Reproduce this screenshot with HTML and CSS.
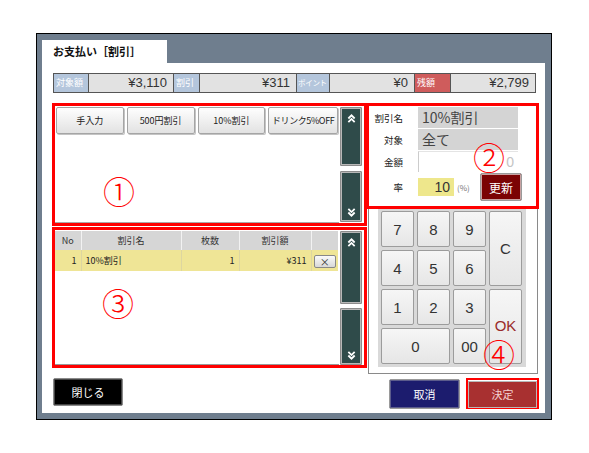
FILE: index.html
```html
<!DOCTYPE html>
<html lang="ja">
<head>
<meta charset="utf-8">
<title>お支払い［割引］</title>
<link rel="stylesheet" href="styles.css">
</head>
<body>
<div class="window">
  <div class="tabbar"><div class="tab">お支払い［割引］</div></div>
  <div class="sheet">
    <div class="summary">
      <div class="lbl lbl-blue">対象額</div><div class="val">¥3,110</div>
      <div class="lbl lbl-blue">割引</div><div class="val">¥311</div>
      <div class="lbl lbl-blue lbl-tight">ポイント</div><div class="val">¥0</div>
      <div class="lbl lbl-red">残額</div><div class="val">¥2,799</div>
    </div>
    <div class="main">
      <div class="col-left">
        <section class="area area1">
          <div class="list list1">
            <div class="presets">
              <button class="btn">手入力</button>
              <button class="btn">500円割引</button>
              <button class="btn">10%割引</button>
              <button class="btn btn-wide">ドリンク5%OFF</button>
            </div>
          </div>
          <div class="scroll">
            <div class="sbtn up s1a"><svg viewBox="0 0 10 10" width="9" height="9"><polyline points="1.5,5 5,1.5 8.5,5"/><polyline points="1.5,9 5,5.5 8.5,9"/></svg></div>
            <div class="sbtn down s1b"><svg viewBox="0 0 10 10" width="9" height="9"><polyline points="1.5,1 5,4.5 8.5,1"/><polyline points="1.5,5 5,8.5 8.5,5"/></svg></div>
          </div>
          <div class="mark mark1">①</div>
        </section>
        <section class="area area3">
          <div class="list list3">
            <table class="tbl">
              <colgroup><col class="c-no"><col class="c-name"><col class="c-qty"><col class="c-amt"><col class="c-del"></colgroup>
              <thead>
                <tr><th>No</th><th>割引名</th><th>枚数</th><th>割引額</th><th></th></tr>
              </thead>
              <tbody>
                <tr><td class="r">1</td><td>10%割引</td><td class="r">1</td><td class="r">¥311</td><td class="c"><span class="xbtn">×</span></td></tr>
              </tbody>
            </table>
          </div>
          <div class="scroll">
            <div class="sbtn up s3a"><svg viewBox="0 0 10 10" width="9" height="9"><polyline points="1.5,5 5,1.5 8.5,5"/><polyline points="1.5,9 5,5.5 8.5,9"/></svg></div>
            <div class="sbtn down s3b"><svg viewBox="0 0 10 10" width="9" height="9"><polyline points="1.5,1 5,4.5 8.5,1"/><polyline points="1.5,5 5,8.5 8.5,5"/></svg></div>
          </div>
          <div class="mark mark3">③</div>
        </section>
        <div class="foot-left"><button class="close">閉じる</button></div>
      </div>
      <div class="col-right">
        <section class="area area2">
          <div class="frow"><span class="flbl">割引名</span><span class="fval grey">10%割引</span></div>
          <div class="frow"><span class="flbl">対象</span><span class="fval grey">全て</span></div>
          <div class="frow"><span class="flbl">金額</span><span class="fval blank">0</span></div>
          <div class="frow frow-rate"><span class="flbl">率</span><span class="fval rate">10</span><span class="pct">(%)</span><button class="update">更新</button></div>
          <div class="mark mark2">②</div>
        </section>
        <div class="keypad">
          <div class="keys">
            <button class="key">7</button>
            <button class="key">8</button>
            <button class="key">9</button>
            <button class="key key-tall">C</button>
            <button class="key">4</button>
            <button class="key">5</button>
            <button class="key">6</button>
            <button class="key">1</button>
            <button class="key">2</button>
            <button class="key">3</button>
            <button class="key key-tall key-ok">OK</button>
            <button class="key key-wide">0</button>
            <button class="key">00</button>
          </div>
          <div class="mark mark4">④</div>
        </div>
        <div class="foot-right">
          <button class="cancel">取消</button>
          <div class="confirm-wrap"><button class="confirm">決定</button></div>
        </div>
      </div>
    </div>
  </div>
</div>
</body>
</html>
```

FILE: styles.css
```css
* { box-sizing: border-box; }
html, body { margin: 0; padding: 0; background: #fff; }
body {
  width: 589px;
  height: 453px;
  font-family: "Noto Sans CJK JP", "DejaVu Sans", sans-serif;
  color: #333;
  overflow: hidden;
}
button { font-family: inherit; margin: 0; padding: 0; cursor: default; }

.window {
  margin: 33px 0 0 36px;
  width: 516px;
  height: 387px;
  border: 1px solid #000;
  background: #6f7e8e;
  padding: 6px 6px 6px 5px;
}
.tabbar { height: 23px; }
.tab {
  width: 125px;
  height: 23px;
  background: #fff;
  font-size: 11px;
  font-weight: bold;
  line-height: 23px;
  padding-left: 11px;
  color: #111;
}
.sheet {
  background: #fff;
  height: 350px;
  padding: 10px 0 0 11px;
}

/* summary bar */
.summary {
  display: grid;
  grid-template-columns: 34px 84px 25px 96px 32px 84px 35px 84px;
  gap: 1px;
  padding: 1px;
  background: #555;
  width: 483px;
  height: 20px;
}
.lbl {
  font-size: 9px;
  color: #fff;
  line-height: 18px;
  padding-left: 2px;
  white-space: nowrap;
  overflow: hidden;
}
.lbl-tight { font-size: 7.5px; letter-spacing: -0.3px; padding-left: 1px; }
.lbl-blue { background: #b4c6dc; }
.lbl-red { background: #cf5c5c; }
.val {
  background: #e2e2e2;
  font-family: "Liberation Sans", "Noto Sans CJK JP", sans-serif;
  font-size: 13px;
  line-height: 18px;
  text-align: right;
  padding-right: 6px;
  color: #333;
}

.main {
  display: flex;
  margin: 10px 0 0 -1px;
}
.col-left { width: 315px; }
.col-right { width: 173px; margin-left: -1px; }

.area {
  position: relative;
  border: 3px solid #f00;
}
.area1 {
  height: 123px;
  display: flex;
  gap: 1px;
}
.area3 {
  height: 141px;
  margin-top: 1px;
  display: flex;
  gap: 1px;
}
.list {
  width: 284px;
  background: #fff;
}
.list1 {
  padding: 1px;
  border-bottom: 1px solid #aaa;
}
.list3 {
  padding-top: 1px;
  border-bottom: 1px solid #999;
}
.presets { display: flex; gap: 3px; }
.btn {
  width: 68px;
  height: 27px;
  border: 1px solid #a5a5a5;
  border-radius: 2px;
  background: linear-gradient(#fefefe, #e2e2e2);
  box-shadow: 1px 1px 0 #c4c4c4;
  font-size: 9px;
  color: #222;
  white-space: nowrap;
}
.btn-wide { width: 70px; letter-spacing: -0.4px; }

.scroll {
  width: 22px;
  display: flex;
  flex-direction: column;
  padding-top: 1px;
}
.sbtn {
  background: #2f4b4a;
  border: 1px solid #8c8c8c;
  box-shadow: inset 0 0 0 1px #b8b8b8;
  border-radius: 1px;
  display: flex;
  justify-content: center;
}
.sbtn svg { fill: none; stroke: #fff; stroke-width: 2; }
.sbtn.up { align-items: flex-start; padding-top: 6px; }
.sbtn.down { align-items: flex-end; padding-bottom: 4px; }
.s1a { height: 59px; }
.s1b { height: 51px; margin-top: 5px; }
.s3a { height: 73px; }
.s3b { height: 57px; margin-top: 4px; }

.mark {
  position: absolute;
  font-size: 32px;
  line-height: 1;
  color: #f00;
  font-weight: 300;
}
.mark1 { left: 48px; top: 68px; }
.mark3 { left: 47px; top: 56px; }
.mark2 { left: 104px; top: 34px; }
.mark4 { left: 114px; top: 128px; }

/* table */
.tbl {
  width: 283px;
  border-collapse: collapse;
  table-layout: fixed;
  font-size: 9px;
}
.c-no { width: 26px; }
.c-name { width: 100px; }
.c-qty { width: 58px; }
.c-amt { width: 72px; }
.c-del { width: 27px; }
.tbl th {
  height: 19px;
  background: #d6d6d6;
  font-weight: normal;
  color: #333;
  border-right: 1px solid #f2f2f2;
  padding: 0;
}
.tbl td {
  height: 21px;
  background: #efe596;
  border-right: 1px solid #ddd6a0;
  padding: 0 4px;
  color: #222;
  white-space: nowrap;
}
.tbl th:last-child, .tbl td:last-child { border-right: none; }
.tbl td.r { text-align: right; }
.tbl td.c { text-align: center; padding: 0; }
.xbtn {
  display: inline-block;
  width: 22px;
  height: 13px;
  line-height: 11px;
  border: 1px solid #888;
  border-radius: 2px;
  background: linear-gradient(#fafafa, #d8d8d8);
  font-size: 10px;
  color: #333;
  vertical-align: middle;
}

.foot-left { margin-top: 10px; padding-left: 1px; }
.close {
  width: 70px;
  height: 28px;
  background: #000;
  border: 1px solid #8a8a8a;
  box-shadow: inset 0 0 0 1px #444;
  border-radius: 2px;
  color: #fff;
  font-size: 11px;
}

/* right form */
.area2 {
  height: 106px;
  padding-top: 1px;
}
.frow {
  display: flex;
  align-items: center;
  height: 21px;
  margin-bottom: 1px;
}
.flbl {
  width: 34px;
  text-align: right;
  font-size: 9.5px;
  color: #222;
  margin-right: 15px;
  white-space: nowrap;
}
.fval {
  width: 100px;
  height: 21px;
  font-size: 14px;
  line-height: 21px;
  padding: 0 4px;
  color: #444;
  white-space: nowrap;
}
.fval.grey { background: #d4d4d4; }
.fval.blank {
  background: #fff;
  border-left: 1px solid #ccc;
  border-top: 1px solid #e4e4e4;
  text-align: right;
  color: #c4c4c4;
  line-height: 20px;
  font-family: "Liberation Sans", sans-serif;
  padding-right: 4px;
}
.frow-rate { margin-top: 1px; height: 28px; }
.fval.rate {
  width: 36px;
  height: 18px;
  background: #eee78c;
  text-align: right;
  line-height: 18px;
  font-family: "Liberation Sans", sans-serif;
  padding-right: 4px;
  color: #333;
}
.pct {
  font-size: 8px;
  color: #777;
  margin-left: 3px;
  width: 20px;
}
.update {
  margin-left: 3px;
  width: 42px;
  height: 28px;
  background: #7b0304;
  border: 1px solid #9a9a9a;
  box-shadow: inset 0 0 0 1px #c9a3a3;
  border-radius: 2px;
  color: #fff;
  font-size: 12px;
}

/* keypad */
.keypad {
  position: relative;
  margin-left: 2px;
  width: 170px;
  height: 165px;
  border: 1px solid #8a8a8a;
  border-top: none;
  padding: 0 0 0 9px;
}
.keys {
  width: 148px;
  background: #d9d9d9;
  padding: 2px 3px 3px 3px;
  display: grid;
  grid-template-columns: repeat(4, 33px);
  grid-template-rows: repeat(4, 36px);
  gap: 3px;
}
.key {
  border: 1px solid #9c9c9c;
  border-radius: 2px;
  background: linear-gradient(#f6f6f6, #e6e6e6);
  font-family: "Liberation Sans", sans-serif;
  font-size: 15px;
  color: #333;
}
.key-tall { grid-row: span 2; }
.key-wide { grid-column: span 2; }
.key-ok { color: #9a2a2a; padding-bottom: 2px; }

.foot-right {
  display: flex;
  justify-content: flex-end;
  align-items: center;
  gap: 6px;
  margin-top: 4px;
}
.cancel {
  width: 71px;
  height: 30px;
  background: #1c1c6e;
  border: 1px solid #9a9a9a;
  box-shadow: inset 0 0 0 1px #5c5c8c;
  border-radius: 2px;
  color: #fff;
  font-size: 11px;
}
.confirm-wrap {
  border: 2px solid #f00;
  width: 73px;
  height: 31px;
}
.confirm {
  width: 100%;
  height: 100%;
  background: #a83030;
  border: 1px solid #b8b8b8;
  color: #f3d0d0;
  font-size: 11px;
}
```
